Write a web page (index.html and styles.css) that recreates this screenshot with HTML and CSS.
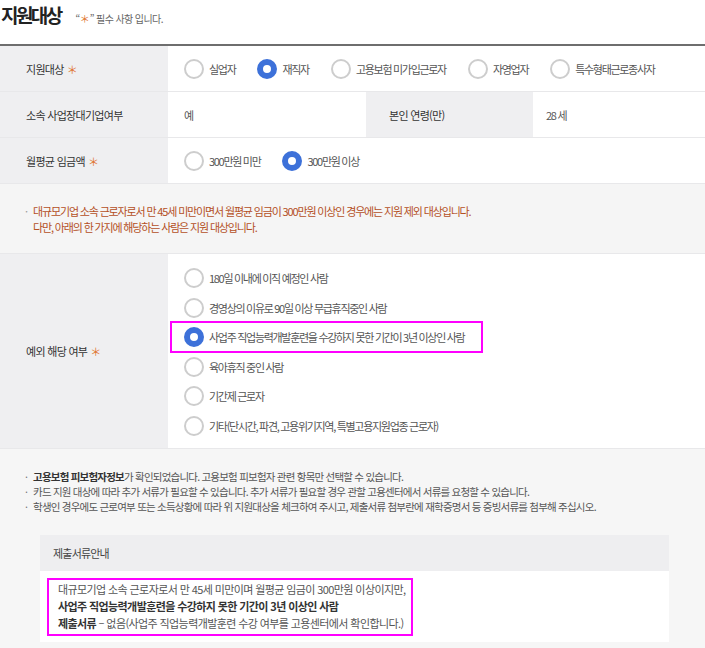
FILE: index.html
```html
<!DOCTYPE html>
<html lang="ko">
<head>
<meta charset="utf-8">
<title>지원대상</title>
<link rel="stylesheet" href="styles.css">
</head>
<body>
<div class="page">
  <div class="head">
    <h2 class="title">지원대상</h2>
    <span class="req">“<i class="ast">＊</i>” 필수 사항 입니다.</span>
  </div>

  <div class="form">
    <div class="row">
      <div class="th">지원대상 <i class="ast">＊</i></div>
      <div class="td radios">
        <label class="opt"><span class="rb"></span>실업자</label>
        <label class="opt"><span class="rb on"></span>재직자</label>
        <label class="opt"><span class="rb"></span>고용보험 미가입근로자</label>
        <label class="opt"><span class="rb"></span>자영업자</label>
        <label class="opt"><span class="rb"></span>특수형태근로종사자</label>
      </div>
    </div>

    <div class="row row-4">
      <div class="th">소속 사업장대기업여부</div>
      <div class="td">예</div>
      <div class="th th2">본인 연령(만)</div>
      <div class="td td2">28 세</div>
    </div>

    <div class="row">
      <div class="th">월평균 임금액 <i class="ast">＊</i></div>
      <div class="td radios">
        <label class="opt"><span class="rb"></span>300만원 미만</label>
        <label class="opt"><span class="rb on"></span>300만원 이상</label>
      </div>
    </div>

    <div class="notice">
      <span class="dot">·</span>
      <p>대규모기업 소속 근로자로서 만 45세 미만이면서 월평균 임금이 300만원 이상인 경우에는 지원 제외 대상입니다.<br>다만, 아래의 한 가지에 해당하는 사람은 지원 대상입니다.</p>
    </div>

    <div class="row row-ex">
      <div class="th">예외 해당 여부 <i class="ast">＊</i></div>
      <div class="td opts">
        <label class="opt"><span class="rb"></span>180일 이내에 이직 예정인 사람</label>
        <label class="opt"><span class="rb"></span>경영상의 이유로 90일 이상 무급휴직중인 사람</label>
        <label class="opt hl"><span class="rb on"></span>사업주 직업능력개발훈련을 수강하지 못한 기간이 3년 이상인 사람</label>
        <label class="opt"><span class="rb"></span>육아휴직 중인 사람</label>
        <label class="opt"><span class="rb"></span>기간제 근로자</label>
        <label class="opt"><span class="rb"></span>기타(단시간, 파견, 고용위기지역, 특별고용지원업종 근로자)</label>
      </div>
    </div>
  </div>

  <div class="info">
    <ul class="notes">
      <li><b>고용보험 피보험자정보</b>가 확인되었습니다. 고용보험 피보험자 관련 항목만 선택할 수 있습니다.</li>
      <li>카드 지원 대상에 따라 추가 서류가 필요할 수 있습니다. 추가 서류가 필요할 경우 관할 고용센터에서 서류를 요청할 수 있습니다.</li>
      <li>학생인 경우에도 근로여부 또는 소득상황에 따라 위 지원대상을 체크하여 주시고, 제출서류 첨부란에 재학증명서 등 증빙서류를 첨부해 주십시오.</li>
    </ul>

    <div class="doc">
      <div class="doc-h">제출서류안내</div>
      <div class="doc-b">
        <div class="doc-box">
          대규모기업 소속 근로자로서 만 45세 미만이며 월평균 임금이 300만원 이상이지만,<br>
          <b>사업주 직업능력개발훈련을 수강하지 못한 기간이 3년 이상인 사람</b><br>
          <b>제출서류</b> – 없음(사업주 직업능력개발훈련 수강 여부를 고용센터에서 확인합니다.)
        </div>
      </div>
    </div>
  </div>
</div>
</body>
</html>
```

FILE: styles.css
```css
* {
  box-sizing: border-box;
  margin: 0;
  padding: 0;
}

html,
body {
  background: #fff;
}

body {
  width: 705px;
  overflow: hidden;
  font-family: "Noto Sans CJK KR", "Noto Sans", sans-serif;
  font-size: 11px;
  color: #555;
  letter-spacing: -1px;
}

.head {
  height: 44px;
  display: flex;
  align-items: baseline;
  padding: 3px 0 0 1px;
}

.title {
  font-size: 19px;
  font-weight: 700;
  color: #222;
  letter-spacing: -2.6px;
  line-height: 24px;
}

.req {
  margin-left: 15px;
  font-size: 10px;
  color: #666;
  letter-spacing: -0.6px;
}

.ast {
  font-style: normal;
  color: #e0742f;
  letter-spacing: 0;
}

.form {
  border-top: 2px solid #6e6e6e;
}

.row {
  display: grid;
  grid-template-columns: 168px 1fr;
  min-height: 46px;
  border-bottom: 1px solid #e8e8ea;
}

.row-4 {
  grid-template-columns: 168px 198px 167px 1fr;
}

.th {
  display: flex;
  align-items: center;
  gap: 3px;
  padding-left: 26px;
  background: #efeff1;
  color: #333;
  font-size: 11px;
  letter-spacing: -0.7px;
}

.th2 {
  padding-left: 23px;
}

.td {
  display: flex;
  align-items: center;
  padding-left: 16px;
  letter-spacing: -1.3px;
}

.td2 {
  padding-left: 13px;
}

.radios {
  gap: 22px;
}

.opt {
  display: inline-flex;
  align-items: center;
  gap: 5px;
}

.rb {
  flex: none;
  width: 20px;
  height: 20px;
  border-radius: 50%;
  border: 2px solid #cdcdcd;
  background: #fff;
}

.rb.on {
  border: 6px solid #3d71d9;
}

.notice {
  display: flex;
  padding: 19px 0 18px 25px;
  background: #f5f5f5;
  color: #b4501f;
  line-height: 16px;
  letter-spacing: -1.15px;
  border-bottom: 1px solid #e8e8ea;
}

.dot {
  width: 8px;
  flex: none;
  color: #999;
}

.opts {
  flex-direction: column;
  align-items: flex-start;
  gap: 9.5px;
  padding: 14px 0 12px 16px;
}

.hl {
  width: 313px;
  margin: -6px 0 -6px -14px;
  padding: 4px 0 4px 12px;
  border: 2px solid #ff00ff;
}

.info {
  background: #f6f6f6;
  padding: 20px 36px 20px 0;
}

.notes {
  list-style: none;
  padding-left: 25px;
  font-size: 10.5px;
  line-height: 15px;
  letter-spacing: -0.78px;
}

.notes li {
  display: flex;
}

.notes li::before {
  content: "·";
  flex: none;
  width: 8px;
  color: #777;
}

.notes b {
  color: #333;
  font-weight: 700;
}

.doc {
  margin: 21px 0 0 40px;
  background: #fff;
}

.doc-h {
  display: flex;
  align-items: center;
  height: 36px;
  padding-left: 13px;
  background: #eeeef0;
  color: #444;
  font-size: 11px;
  letter-spacing: -0.8px;
}

.doc-b {
  padding: 7px 7px 6px;
}

.doc-box {
  display: inline-block;
  white-space: nowrap;
  padding: 1px 6px 2px 9px;
  border: 2px solid #ff00ff;
  font-size: 11px;
  line-height: 17px;
  letter-spacing: -0.6px;
  color: #555;
}

.doc-box b {
  color: #333;
}
```
